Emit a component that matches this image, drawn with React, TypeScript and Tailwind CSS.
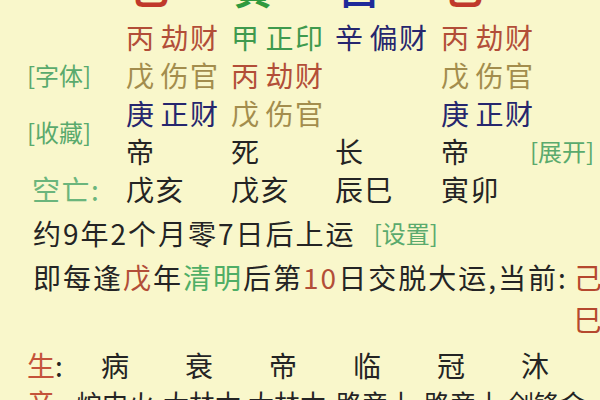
import React from "react";

const RB = "text-[#b24e38]"; // fire red-brown
const OL = "text-[#a38d4d]"; // earth olive
const NV = "text-[#26266e]"; // metal navy
const GR = "text-[#3f9a4e]"; // wood green
const LG = "text-[#5aaa6d]"; // link green

function Stem({ s, g, c }: { s: string; g: string; c: string }) {
  return (
    <div className={`${c} whitespace-nowrap tracking-[1.5px] flex`}>
      <span>{s}</span>
      <span className="ml-[5px]">{g}</span>
    </div>
  );
}

export default function App() {
  return (
    <div
      className="w-[600px] h-[400px] overflow-hidden bg-[#f9f7cb] text-[28px] text-[#242424]"
      style={{ fontFamily: '"Noto Sans CJK SC", "Noto Sans", sans-serif' }}
    >
      {/* big branch chars, cut at top */}
      <div className="h-[18px] overflow-hidden grid grid-cols-[131px_103px_106px_105px_1fr]">
        <div />
        {[
          ["巳", "text-[#c0392b]"],
          ["寅", "text-[#2f9a3f]"],
          ["酉", "text-[#1f2a9a]"],
          ["巳", "text-[#c0392b]"],
        ].map(([ch, c], i) => (
          <div key={i} className={`${c} text-[38px] font-bold leading-[38px] mt-[-31px]`}>
            {ch}
          </div>
        ))}
      </div>

      {/* hidden stems grid */}
      <div className="grid grid-cols-[126px_105px_104px_106px_89px_1fr] grid-rows-[38px_38px_38px_38px] items-center leading-none">
        <div className="row-start-2 col-start-1 pl-[27px] text-[24px] text-[#5aaa6d]">[字体]</div>
        <div className="row-start-3 row-span-2 col-start-1 pl-[27px] text-[24px] text-[#5aaa6d]">[收藏]</div>

        <div className="row-start-1 col-start-2"><Stem s="丙" g="劫财" c={RB} /></div>
        <div className="row-start-2 col-start-2"><Stem s="戊" g="伤官" c={OL} /></div>
        <div className="row-start-3 col-start-2"><Stem s="庚" g="正财" c={NV} /></div>
        <div className="row-start-4 col-start-2">帝</div>

        <div className="row-start-1 col-start-3"><Stem s="甲" g="正印" c={GR} /></div>
        <div className="row-start-2 col-start-3"><Stem s="丙" g="劫财" c={RB} /></div>
        <div className="row-start-3 col-start-3"><Stem s="戊" g="伤官" c={OL} /></div>
        <div className="row-start-4 col-start-3">死</div>

        <div className="row-start-1 col-start-4"><Stem s="辛" g="偏财" c={NV} /></div>
        <div className="row-start-4 col-start-4">长</div>

        <div className="row-start-1 col-start-5"><Stem s="丙" g="劫财" c={RB} /></div>
        <div className="row-start-2 col-start-5"><Stem s="戊" g="伤官" c={OL} /></div>
        <div className="row-start-3 col-start-5"><Stem s="庚" g="正财" c={NV} /></div>
        <div className="row-start-4 col-start-5">帝</div>

        <div className="row-start-4 col-start-6 text-[24px] text-[#5aaa6d] whitespace-nowrap">[展开]</div>
      </div>

      {/* 空亡 row */}
      <div className="grid grid-cols-[126px_105px_104px_106px_1fr] h-[38px] items-center leading-none tracking-[1.5px]">
        <div className="pl-[32px] text-[#6bb57c]">空亡:</div>
        <div>戊亥</div>
        <div>戊亥</div>
        <div>辰巳</div>
        <div>寅卯</div>
      </div>

      <div className="mt-[6px] h-[38px] flex items-center pl-[33px] leading-none whitespace-nowrap">
        <span className="tracking-[2px]">约9年2个月零7日后上运</span>
        <span className={`ml-[18px] text-[24px] ${LG}`}>[设置]</span>
      </div>

      <div className="mt-[6px] flex pl-[33px] leading-none whitespace-nowrap">
        <div className="h-[38px] flex items-center tracking-[2px]">
          即每逢<span className="text-[#b24e38]">戊</span>年<span className="text-[#4fae66]">清明</span>后第<span className="text-[#b24e38]">10</span>日交脱大运,当前:
        </div>
        <div className="ml-[6px] flex flex-col text-[#b5482e]">
          <div className="h-[38px] flex items-center">己</div>
          <div className="h-[38px] mt-[4px] flex items-center">巳</div>
        </div>
      </div>

      <div className="mt-[8px] grid grid-cols-[101px_84px_84px_84px_84px_84px_1fr] h-[38px] items-center leading-none">
        <div className="pl-[27px]">
          <span className="text-[#c4533a]">生</span>:
        </div>
        <div>病</div>
        <div>衰</div>
        <div>帝</div>
        <div>临</div>
        <div>冠</div>
        <div>沐</div>
      </div>

      <div className="grid grid-cols-[76px_87px_85px_88px_88px_84px_1fr] h-[38px] items-center leading-none whitespace-nowrap text-[26px]">
        <div className="pl-[27px] text-[28px]">
          <span className="text-[#c4533a]">音</span>:
        </div>
        <div>炉中火</div>
        <div>大林木</div>
        <div>大林木</div>
        <div>路旁土</div>
        <div>路旁土</div>
        <div>剑锋金</div>
      </div>
    </div>
  );
}
